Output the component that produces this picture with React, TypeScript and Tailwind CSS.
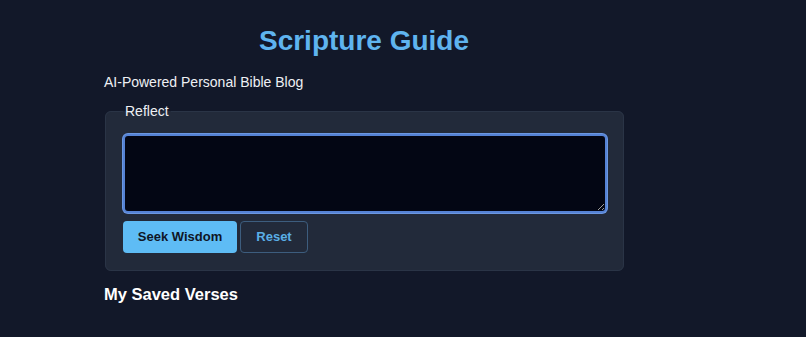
import { useState } from 'react';

export default function App() {
  const [text, setText] = useState('');

  return (
    <div className="min-h-screen bg-[#121829] text-white" style={{ fontFamily: '"Liberation Sans", Arial, sans-serif' }}>
      <div className="ml-[104px] w-[520px] pt-[24px]">
        {/* Header */}
        <h1 className="text-center text-[28px] font-bold leading-[34px] text-[#5fb4ef]">Scripture Guide</h1>
        <p className="mt-[15px] text-[14px] leading-[18px] text-[#eef0f4]">AI-Powered Personal Bible Blog</p>

        {/* Reflect form */}
        <fieldset className="ml-[1px] mt-[12px] w-[519px] rounded-md border border-[#2a3446] bg-[#222a3a] pl-[17px] pr-[16px] pt-[14px] pb-[17px]">
          <legend className="px-[2px] text-[14px] leading-[17px] text-[#eef0f4]">Reflect</legend>
          <textarea
            autoFocus
            value={text}
            onChange={(e) => setText(e.target.value)}
            className="block h-[79px] w-full rounded-[5px] border-2 border-[#5582d4] bg-[#030614] px-[9px] py-[10px] text-[14px] text-white outline-none ring-1 ring-[#6b97e2]"
          />
          <div className="mt-[8px] flex gap-[3px]">
            <button className="h-[32px] w-[114px] rounded-[4px] bg-[#5ebcf5] text-[13px] font-bold text-[#0f1626]">
              Seek Wisdom
            </button>
            <button
              onClick={() => setText('')}
              className="h-[32px] w-[68px] rounded-[4px] border border-[#3d5d7e] text-[13px] font-bold text-[#5aaee6]"
            >
              Reset
            </button>
          </div>
        </fieldset>

        <h2 className="mt-[13px] text-[16.5px] font-bold leading-[20px] text-white">My Saved Verses</h2>
      </div>
    </div>
  );
}
